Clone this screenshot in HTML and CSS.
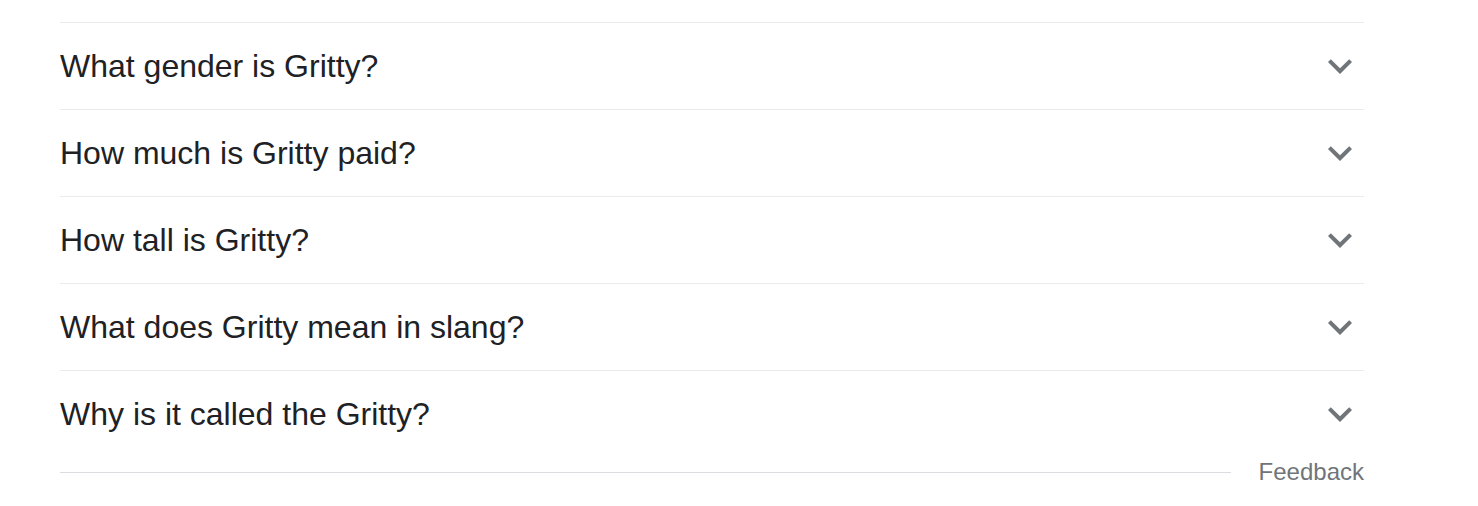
FILE: index.html
```html
<!DOCTYPE html>
<html lang="en">
<head>
    <meta charset="UTF-8">
    <title>People also ask</title>
    <link rel="stylesheet" href="styles.css">
</head>
<body>
    <div class="related">
        <div class="question">
            <span>What gender is Gritty?</span>
            <svg class="chevron" viewBox="0 0 24 24"><path d="M16.59 8.59L12 13.17 7.41 8.59 6 10l6 6 6-6z"/></svg>
        </div>
        <div class="question">
            <span>How much is Gritty paid?</span>
            <svg class="chevron" viewBox="0 0 24 24"><path d="M16.59 8.59L12 13.17 7.41 8.59 6 10l6 6 6-6z"/></svg>
        </div>
        <div class="question">
            <span>How tall is Gritty?</span>
            <svg class="chevron" viewBox="0 0 24 24"><path d="M16.59 8.59L12 13.17 7.41 8.59 6 10l6 6 6-6z"/></svg>
        </div>
        <div class="question">
            <span>What does Gritty mean in slang?</span>
            <svg class="chevron" viewBox="0 0 24 24"><path d="M16.59 8.59L12 13.17 7.41 8.59 6 10l6 6 6-6z"/></svg>
        </div>
        <div class="question">
            <span>Why is it called the Gritty?</span>
            <svg class="chevron" viewBox="0 0 24 24"><path d="M16.59 8.59L12 13.17 7.41 8.59 6 10l6 6 6-6z"/></svg>
        </div>
        <div class="footer">
            <div class="rule"></div>
            <span class="feedback">Feedback</span>
        </div>
    </div>
</body>
</html>
```

FILE: styles.css
```css
* {
    margin: 0;
    padding: 0;
    box-sizing: border-box;
}

body {
    background-color: #fff;
    color: #202124;
    font-family: "Liberation Sans", Arial, sans-serif;
}

.related {
    width: 1304px;
    margin-left: 60px;
    padding-top: 22px;
}

.question {
    display: flex;
    align-items: center;
    justify-content: space-between;
    height: 87px;
    border-top: 1px solid #ebebeb;
    font-size: 32px;
}

.chevron {
    width: 48px;
    height: 48px;
    fill: #70757a;
}

.footer {
    display: flex;
    align-items: center;
    height: 30px;
}

.rule {
    flex: 1;
    height: 1px;
    background-color: #dadce0;
    margin-right: 28px;
}

.feedback {
    font-size: 24px;
    color: #70757a;
}
```
